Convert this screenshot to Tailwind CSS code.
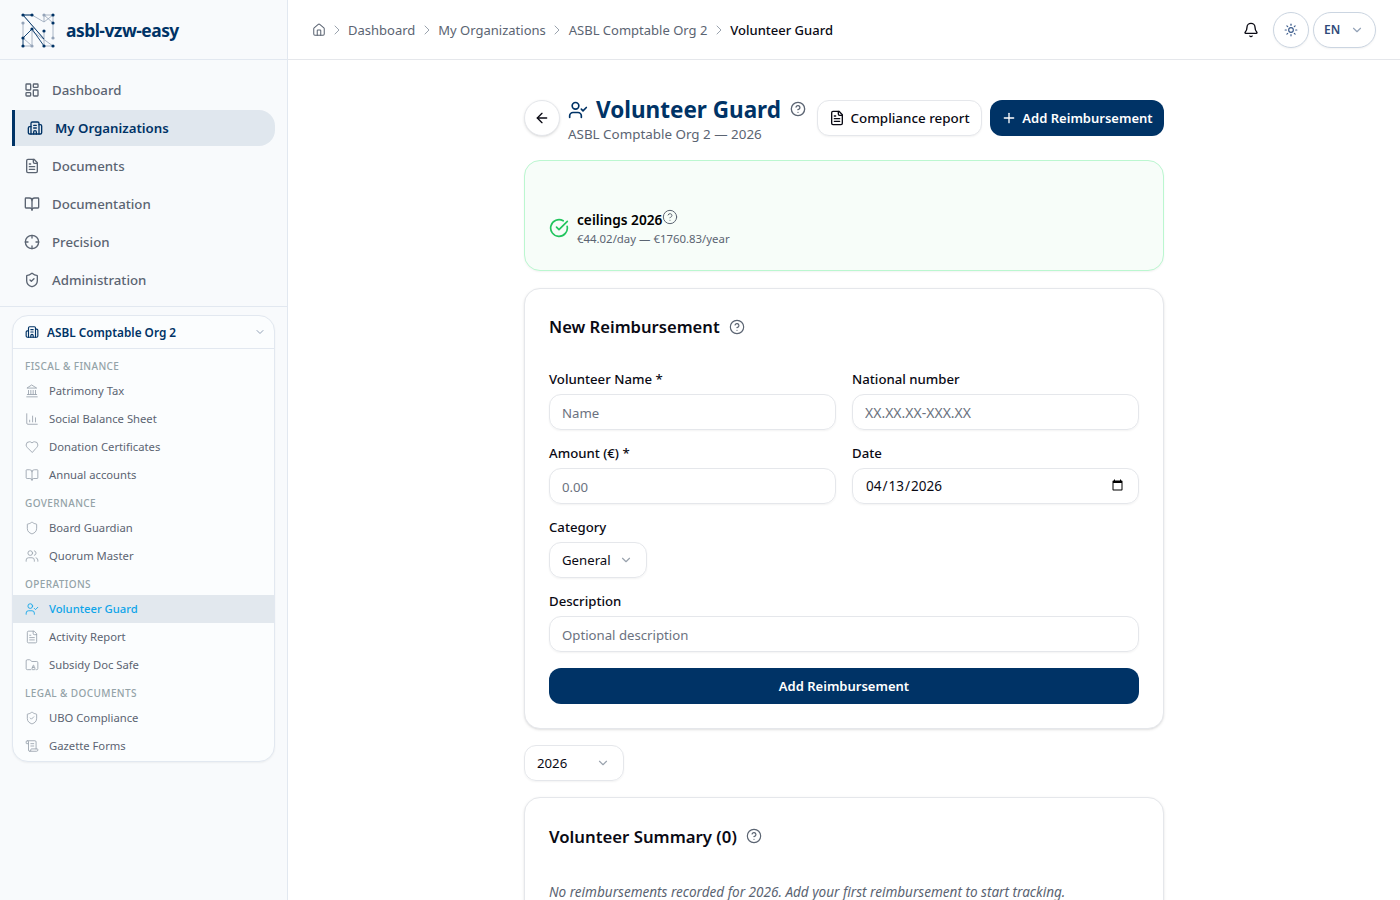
<!DOCTYPE html>
<html lang="en">
  <head>
    <meta charset="UTF-8" />
    <title>Volunteer Guard</title>
    <script src="https://cdn.jsdelivr.net/npm/@tailwindcss/browser@4"></script>
  </head>
  <body class="bg-white font-['Noto_Sans',sans-serif] text-[#0a0a14]">
    <svg class="hidden">
      <symbol id="i-dash" viewBox="0 0 24 24" fill="none" stroke="currentColor" stroke-linecap="round" stroke-linejoin="round"><rect x="3" y="3" width="7" height="9" rx="1"/><rect x="14" y="3" width="7" height="5" rx="1"/><rect x="14" y="12" width="7" height="9" rx="1"/><rect x="3" y="16" width="7" height="5" rx="1"/></symbol>
      <symbol id="i-building" viewBox="0 0 24 24" fill="none" stroke="currentColor" stroke-linecap="round" stroke-linejoin="round"><path d="M10 12h4"/><path d="M10 8h4"/><path d="M14 21v-3a2 2 0 0 0-4 0v3"/><path d="M6 10H4a2 2 0 0 0-2 2v7a2 2 0 0 0 2 2h16a2 2 0 0 0 2-2V9a2 2 0 0 0-2-2h-2"/><path d="M6 21V5a2 2 0 0 1 2-2h8a2 2 0 0 1 2 2v16"/></symbol>
      <symbol id="i-file" viewBox="0 0 24 24" fill="none" stroke="currentColor" stroke-linecap="round" stroke-linejoin="round"><path d="M15 2H6a2 2 0 0 0-2 2v16a2 2 0 0 0 2 2h12a2 2 0 0 0 2-2V7Z"/><path d="M14 2v4a2 2 0 0 0 2 2h4"/><path d="M10 9H8"/><path d="M16 13H8"/><path d="M16 17H8"/></symbol>
      <symbol id="i-book" viewBox="0 0 24 24" fill="none" stroke="currentColor" stroke-linecap="round" stroke-linejoin="round"><path d="M12 7v14"/><path d="M3 18a1 1 0 0 1-1-1V4a1 1 0 0 1 1-1h5a4 4 0 0 1 4 4 4 4 0 0 1 4-4h5a1 1 0 0 1 1 1v13a1 1 0 0 1-1 1h-6a3 3 0 0 0-3 3 3 3 0 0 0-3-3z"/></symbol>
      <symbol id="i-cross" viewBox="0 0 24 24" fill="none" stroke="currentColor" stroke-linecap="round" stroke-linejoin="round"><circle cx="12" cy="12" r="10"/><path d="M22 12h-4"/><path d="M6 12H2"/><path d="M12 6V2"/><path d="M12 22v-4"/></symbol>
      <symbol id="i-shieldc" viewBox="0 0 24 24" fill="none" stroke="currentColor" stroke-linecap="round" stroke-linejoin="round"><path d="M20 13c0 5-3.5 7.5-7.66 8.95a1 1 0 0 1-.67-.01C7.5 20.5 4 18 4 13V6a1 1 0 0 1 1-1c2 0 4.5-1.2 6.24-2.72a1.17 1.17 0 0 1 1.52 0C14.51 3.81 17 5 19 5a1 1 0 0 1 1 1z"/><path d="m9 12 2 2 4-4"/></symbol>
      <symbol id="i-shield" viewBox="0 0 24 24" fill="none" stroke="currentColor" stroke-linecap="round" stroke-linejoin="round"><path d="M20 13c0 5-3.5 7.5-7.66 8.95a1 1 0 0 1-.67-.01C7.5 20.5 4 18 4 13V6a1 1 0 0 1 1-1c2 0 4.5-1.2 6.24-2.72a1.17 1.17 0 0 1 1.52 0C14.51 3.81 17 5 19 5a1 1 0 0 1 1 1z"/></symbol>
      <symbol id="i-bank" viewBox="0 0 24 24" fill="none" stroke="currentColor" stroke-linecap="round" stroke-linejoin="round"><path d="M3 22h18"/><path d="M6 18v-7"/><path d="M10 18v-7"/><path d="M14 18v-7"/><path d="M18 18v-7"/><path d="M4 18h16"/><path d="M12 2l8 5H4z"/></symbol>
      <symbol id="i-chart" viewBox="0 0 24 24" fill="none" stroke="currentColor" stroke-linecap="round" stroke-linejoin="round"><path d="M3 3v16a2 2 0 0 0 2 2h16"/><path d="M8 17v-3"/><path d="M13 17V7"/><path d="M18 17V10"/></symbol>
      <symbol id="i-heart" viewBox="0 0 24 24" fill="none" stroke="currentColor" stroke-linecap="round" stroke-linejoin="round"><path d="M19 14c1.49-1.46 3-3.21 3-5.5A5.5 5.5 0 0 0 16.5 3c-1.76 0-3 .5-4.5 2-1.5-1.5-2.74-2-4.5-2A5.5 5.5 0 0 0 2 8.5c0 2.3 1.5 4.05 3 5.5l7 7Z"/></symbol>
      <symbol id="i-users" viewBox="0 0 24 24" fill="none" stroke="currentColor" stroke-linecap="round" stroke-linejoin="round"><path d="M16 21v-2a4 4 0 0 0-4-4H6a4 4 0 0 0-4 4v2"/><circle cx="9" cy="7" r="4"/><path d="M22 21v-2a4 4 0 0 0-3-3.87"/><path d="M16 3.13a4 4 0 0 1 0 7.75"/></symbol>
      <symbol id="i-ucheck" viewBox="0 0 24 24" fill="none" stroke="currentColor" stroke-linecap="round" stroke-linejoin="round"><path d="M16 21v-2a4 4 0 0 0-4-4H6a4 4 0 0 0-4 4v2"/><circle cx="9" cy="7" r="4"/><path d="m16 11 2 2 4-4"/></symbol>
      <symbol id="i-folder" viewBox="0 0 24 24" fill="none" stroke="currentColor" stroke-linecap="round" stroke-linejoin="round"><path d="M10 20H4a2 2 0 0 1-2-2V5a2 2 0 0 1 2-2h3.9a2 2 0 0 1 1.69.9l.81 1.2a2 2 0 0 0 1.67.9H20a2 2 0 0 1 2 2v10a2 2 0 0 1-2 2h-1"/><rect x="12" y="16" width="5" height="4" rx="1"/><path d="M15.5 16v-2.5a1 1 0 0 0-2 0V16"/></symbol>
      <symbol id="i-scroll" viewBox="0 0 24 24" fill="none" stroke="currentColor" stroke-linecap="round" stroke-linejoin="round"><path d="M15 12h-5"/><path d="M15 8h-5"/><path d="M19 17V5a2 2 0 0 0-2-2H4"/><path d="M8 21h12a2 2 0 0 0 2-2v-1a1 1 0 0 0-1-1H11a1 1 0 0 0-1 1v1a2 2 0 1 1-4 0V5a2 2 0 1 0-4 0v2a1 1 0 0 0 1 1h3"/></symbol>
      <symbol id="i-help" viewBox="0 0 24 24" fill="none" stroke="currentColor" stroke-linecap="round" stroke-linejoin="round"><circle cx="12" cy="12" r="10"/><path d="M9.09 9a3 3 0 0 1 5.83 1c0 2-3 3-3 3"/><path d="M12 17h.01"/></symbol>
      <symbol id="i-chev" viewBox="0 0 24 24" fill="none" stroke="currentColor" stroke-linecap="round" stroke-linejoin="round"><path d="m6 9 6 6 6-6"/></symbol>
      <symbol id="i-right" viewBox="0 0 24 24" fill="none" stroke="currentColor" stroke-linecap="round" stroke-linejoin="round"><path d="m9 18 6-6-6-6"/></symbol>
      <symbol id="i-home" viewBox="0 0 24 24" fill="none" stroke="currentColor" stroke-linecap="round" stroke-linejoin="round"><path d="M15 21v-8a1 1 0 0 0-1-1h-4a1 1 0 0 0-1 1v8"/><path d="M3 10a2 2 0 0 1 .709-1.528l7-5.999a2 2 0 0 1 2.582 0l7 5.999A2 2 0 0 1 21 10v9a2 2 0 0 1-2 2H5a2 2 0 0 1-2-2z"/></symbol>
    </svg>

    <div class="flex h-screen overflow-hidden">
      <aside class="w-[288px] shrink-0 border-r border-[#e2e8f0] bg-[#f8fafc]">
        <div class="flex h-[60px] items-center gap-[11px] border-b border-[#e2e8f0] pl-[21px]">
          <svg class="h-[36px] w-[34px]" viewBox="0 0 34 36" fill="none">
            <g stroke="#94a3b8" stroke-width="0.8">
              <path d="M2 3h9M23 3h9v24M23 3v7M23 10l9-7M23 3l9 8M2 10v16M11 3l12 7M2 3l21 24M11 19l21 15M23 19v15"/>
              <path d="M11 19v15M2 34h9M23 34h9M2 26l9 8"/>
            </g>
            <g stroke="#003366" stroke-width="0.9">
              <path d="M2 3l21 24M2 26l9-9 12 17M2 26v8M2 3h9"/>
            </g>
            <g fill="#003366">
              <circle cx="2" cy="3" r="1.6"/><circle cx="11" cy="3" r="1.6"/><circle cx="32" cy="3" r="1.6"/><circle cx="32" cy="11" r="1.6"/>
              <circle cx="11" cy="17" r="1.6"/><circle cx="23" cy="19" r="1.6"/><circle cx="2" cy="26" r="1.6"/><circle cx="2" cy="34" r="1.6"/>
              <circle cx="23" cy="34" r="1.6"/><circle cx="32" cy="34" r="1.6"/>
            </g>
            <g fill="#94a3b8">
              <circle cx="23" cy="3" r="1.6"/><circle cx="2" cy="11" r="1.6"/><circle cx="32" cy="26" r="1.6"/><circle cx="11" cy="34" r="1.6"/>
            </g>
          </svg>
          <span class="pt-[2px] text-[17.4px] font-bold tracking-[-0.5px] text-[#003366]">asbl-vzw-easy</span>
        </div>

        <nav class="flex flex-col gap-[2px] border-b border-[#e2e8f0] px-3 pt-3 pb-2 text-[13.25px] font-medium text-[#5b6472]">
          <a class="flex h-9 items-center gap-3 px-3"><svg class="size-4 stroke-[2]"><use href="#i-dash"/></svg><span class="pt-[2px]">Dashboard</span></a>
          <a class="flex h-9 items-center gap-3 rounded-r-2xl border-l-[3px] border-[#003366] bg-[#e0e7ee] px-3 pr-3 font-semibold text-[#003366]"><svg class="size-4 stroke-[2]"><use href="#i-building"/></svg><span class="pt-[2px]">My Organizations</span></a>
          <a class="flex h-9 items-center gap-3 px-3"><svg class="size-4 stroke-[2]"><use href="#i-file"/></svg><span class="pt-[2px]">Documents</span></a>
          <a class="flex h-9 items-center gap-3 px-3"><svg class="size-4 stroke-[2]"><use href="#i-book"/></svg><span class="pt-[2px]">Documentation</span></a>
          <a class="flex h-9 items-center gap-3 px-3"><svg class="size-4 stroke-[2]"><use href="#i-cross"/></svg><span class="pt-[2px]">Precision</span></a>
          <a class="flex h-9 items-center gap-3 px-3"><svg class="size-4 stroke-[2]"><use href="#i-shieldc"/></svg><span class="pt-[2px]">Administration</span></a>
        </nav>

        <div class="mx-3 mt-2 overflow-hidden rounded-2xl border border-[#e2e8f0] bg-[#fbfdfe] shadow-xs">
          <div class="flex h-[33px] items-center gap-2 border-b border-[#e2e8f0] pr-2 pl-3 text-[11.8px] font-semibold text-[#003366]">
            <svg class="size-[14px] stroke-[2]"><use href="#i-building"/></svg>
            <span class="flex-1 pt-[2px]">ASBL Comptable Org 2</span>
            <svg class="size-3 stroke-[2] text-[#94a3b8]"><use href="#i-chev"/></svg>
          </div>
          <div class="pb-[1px] text-[11.25px] text-[#5b6472]">
            <div class="px-3 pt-[10px] pb-[3px] text-[10px] leading-[15px] font-medium tracking-[0.4px] text-[#94a3a8]">FISCAL &amp; FINANCE</div>
            <a class="flex h-7 items-center gap-[10px] px-3"><svg class="size-[14px] stroke-[1.5] text-[#9aa3ae]"><use href="#i-bank"/></svg>Patrimony Tax</a>
            <a class="flex h-7 items-center gap-[10px] px-3"><svg class="size-[14px] stroke-[1.5] text-[#9aa3ae]"><use href="#i-chart"/></svg>Social Balance Sheet</a>
            <a class="flex h-7 items-center gap-[10px] px-3"><svg class="size-[14px] stroke-[1.5] text-[#9aa3ae]"><use href="#i-heart"/></svg>Donation Certificates</a>
            <a class="flex h-7 items-center gap-[10px] px-3"><svg class="size-[14px] stroke-[1.5] text-[#9aa3ae]"><use href="#i-book"/></svg>Annual accounts</a>
            <div class="px-3 pt-[7px] pb-[3px] text-[10px] leading-[15px] font-medium tracking-[0.4px] text-[#94a3a8]">GOVERNANCE</div>
            <a class="flex h-7 items-center gap-[10px] px-3"><svg class="size-[14px] stroke-[1.5] text-[#9aa3ae]"><use href="#i-shield"/></svg>Board Guardian</a>
            <a class="flex h-7 items-center gap-[10px] px-3"><svg class="size-[14px] stroke-[1.5] text-[#9aa3ae]"><use href="#i-users"/></svg>Quorum Master</a>
            <div class="px-3 pt-[7px] pb-[3px] text-[10px] leading-[15px] font-medium tracking-[0.4px] text-[#94a3a8]">OPERATIONS</div>
            <a class="flex h-7 items-center gap-[10px] bg-[#e2e8ee] px-3 font-medium text-[#0ea5e9]"><svg class="size-[14px] stroke-[1.5]"><use href="#i-ucheck"/></svg>Volunteer Guard</a>
            <a class="flex h-7 items-center gap-[10px] px-3"><svg class="size-[14px] stroke-[1.5] text-[#9aa3ae]"><use href="#i-file"/></svg>Activity Report</a>
            <a class="flex h-7 items-center gap-[10px] px-3"><svg class="size-[14px] stroke-[1.5] text-[#9aa3ae]"><use href="#i-folder"/></svg>Subsidy Doc Safe</a>
            <div class="px-3 pt-[7px] pb-[3px] text-[10px] leading-[15px] font-medium tracking-[0.4px] text-[#94a3a8]">LEGAL &amp; DOCUMENTS</div>
            <a class="flex h-7 items-center gap-[10px] px-3"><svg class="size-[14px] stroke-[1.5] text-[#9aa3ae]"><use href="#i-shieldc"/></svg>UBO Compliance</a>
            <a class="flex h-7 items-center gap-[10px] px-3"><svg class="size-[14px] stroke-[1.5] text-[#9aa3ae]"><use href="#i-scroll"/></svg>Gazette Forms</a>
          </div>
        </div>
      </aside>

      <div class="min-w-0 flex-1">
        <header class="flex h-[60px] items-center border-b border-[#e5e7eb] pr-6 pl-6">
          <div class="flex flex-1 items-center gap-[3.5px] text-[13px] text-[#5b6472]">
            <svg class="-mr-[1px] size-[14px] stroke-[1.75]"><use href="#i-home"/></svg>
            <svg class="size-4 stroke-[1.5] text-[#9aa3ae]"><use href="#i-right"/></svg>
            <span class="pt-[2px]">Dashboard</span>
            <svg class="size-4 stroke-[1.5] text-[#9aa3ae]"><use href="#i-right"/></svg>
            <span class="pt-[2px]">My Organizations</span>
            <svg class="size-4 stroke-[1.5] text-[#9aa3ae]"><use href="#i-right"/></svg>
            <span class="pt-[2px]">ASBL Comptable Org 2</span>
            <svg class="size-4 stroke-[1.5] text-[#9aa3ae]"><use href="#i-right"/></svg>
            <span class="pt-[2px] font-medium text-[#0a0a14]">Volunteer Guard</span>
          </div>
          <svg class="mr-[14px] size-4" viewBox="0 0 24 24" fill="none" stroke="currentColor" stroke-width="2" stroke-linecap="round" stroke-linejoin="round"><path d="M10.268 21a2 2 0 0 0 3.464 0"/><path d="M3.262 15.326A1 1 0 0 0 4 17h16a1 1 0 0 0 .74-1.673C19.41 13.956 18 12.499 18 8A6 6 0 0 0 6 8c0 4.499-1.411 5.956-2.738 7.326"/></svg>
          <button class="flex size-9 items-center justify-center rounded-full border border-[#cbd5e1] bg-white shadow-xs">
            <svg class="size-[14px] text-[#3b5b8c]" viewBox="0 0 24 24" fill="none" stroke="currentColor" stroke-width="2" stroke-linecap="round" stroke-linejoin="round"><circle cx="12" cy="12" r="4"/><path d="M12 2v2"/><path d="M12 20v2"/><path d="m4.93 4.93 1.41 1.41"/><path d="m17.66 17.66 1.41 1.41"/><path d="M2 12h2"/><path d="M20 12h2"/><path d="m6.34 17.66-1.41 1.41"/><path d="m19.07 4.93-1.41 1.41"/></svg>
          </button>
          <button class="ml-1 flex h-9 w-[63px] items-center gap-[10px] rounded-full border border-[#cbd5e1] bg-white pl-[10px] text-[12px] font-semibold text-[#2f4a7a] shadow-xs">
            EN
            <svg class="size-[14px] stroke-[2] text-[#94a3b8]"><use href="#i-chev"/></svg>
          </button>
        </header>

        <main class="mx-auto flex w-[640px] flex-col pt-10">
          <div class="flex items-start">
            <button class="flex size-9 items-center justify-center rounded-full border border-[#e5e7eb] bg-white shadow-sm">
              <svg class="size-4" viewBox="0 0 24 24" fill="none" stroke="currentColor" stroke-width="2" stroke-linecap="round" stroke-linejoin="round"><path d="m12 19-7-7 7-7"/><path d="M19 12H5"/></svg>
            </button>
            <div class="ml-2 flex-1">
              <div class="-mt-[4px] flex h-[28px] items-center">
                <svg class="mr-2 size-5 stroke-[2] text-[#003366]"><use href="#i-ucheck"/></svg>
                <h1 class="text-[22.5px] leading-[28px] font-bold whitespace-nowrap text-[#003366]">Volunteer Guard</h1>
                <svg class="-mt-[3px] ml-[9px] size-4 stroke-[2] text-[#5b6472]"><use href="#i-help"/></svg>
              </div>
              <p class="text-[13.4px] leading-5 text-[#5b6472]">ASBL Comptable Org 2 — 2026</p>
            </div>
            <button class="flex h-9 w-[165px] items-center justify-center gap-[5px] rounded-xl border border-[#e5e7eb] bg-white text-[13.4px] font-medium shadow-xs">
              <svg class="size-4 stroke-[2]"><use href="#i-file"/></svg>Compliance report
            </button>
            <button class="ml-2 flex h-9 w-[174px] items-center justify-center gap-[5px] rounded-xl bg-[#003366] text-[13px] font-semibold text-white">
              <svg class="size-4" viewBox="0 0 24 24" fill="none" stroke="currentColor" stroke-width="2" stroke-linecap="round"><path d="M5 12h14"/><path d="M12 5v14"/></svg><span class="pt-[2px]">Add Reimbursement</span>
            </button>
          </div>

          <section class="mt-4 flex h-[111px] items-center gap-2 rounded-2xl border border-[#bbf7d0] bg-[#f7fdf9] px-6 pt-[25px] shadow-xs">
            <svg class="size-5 stroke-[2] text-[#22c55e]" viewBox="0 0 24 24" fill="none" stroke="currentColor" stroke-linecap="round" stroke-linejoin="round"><path d="M21.801 10A10 10 0 1 1 17 3.335"/><path d="m9 11 3 3L22 4"/></svg>
            <div>
              <div class="flex items-start text-[13.7px] leading-5 font-semibold text-black">ceilings 2026<svg class="-mt-[1px] size-4 stroke-[1.5] font-normal text-[#5b6472]"><use href="#i-help"/></svg></div>
              <p class="mt-[1px] text-[11.4px] leading-4 text-[#5b6472]">€44.02/day — €1760.83/year</p>
            </div>
          </section>

          <section class="mt-[17px] rounded-2xl border border-[#e5e7eb] bg-white px-6 pt-6 pb-6 shadow-sm">
            <div class="flex h-7 items-center gap-[9px]">
              <h2 class="text-[16.6px] font-semibold">New Reimbursement</h2>
              <svg class="size-4 stroke-[1.75] text-[#5b6472]"><use href="#i-help"/></svg>
            </div>
            <div class="mt-7 grid grid-cols-2 gap-x-4 gap-y-[13px]">
              <label class="block">
                <span class="mb-[5px] block h-5 text-[13.2px] leading-5 font-medium">Volunteer Name *</span>
                <input class="h-9 w-full rounded-xl border border-[#e5e7eb] px-3 pt-[2px] text-[13.2px] shadow-xs placeholder:text-[#6b7280]" placeholder="Name" />
              </label>
              <label class="block">
                <span class="mb-[5px] block h-5 text-[13.2px] leading-5 font-medium">National number</span>
                <input class="h-9 w-full rounded-xl border border-[#e5e7eb] px-3 text-[14px] shadow-xs placeholder:text-[#6b7280]" placeholder="XX.XX.XX-XXX.XX" />
              </label>
              <label class="block">
                <span class="mb-[5px] block h-5 text-[13.2px] leading-5 font-medium">Amount (€) *</span>
                <input class="h-9 w-full rounded-xl border border-[#e5e7eb] px-3 pt-[2px] text-[13.2px] shadow-xs placeholder:text-[#6b7280]" placeholder="0.00" />
              </label>
              <label class="block">
                <span class="mb-[5px] block h-5 text-[13.2px] leading-5 font-medium">Date</span>
                <input type="date" value="2026-04-13" class="h-9 w-full rounded-xl border border-[#e5e7eb] px-3 text-[13.5px] shadow-xs" />
              </label>
              <div class="col-span-2">
                <span class="mb-[5px] block h-5 text-[13.2px] leading-5 font-medium">Category</span>
                <div class="flex h-9 w-[98px] items-center justify-between rounded-xl border border-[#e5e7eb] pr-[13px] pl-3 text-[13.2px] shadow-xs">
                  <span class="pt-[2px]">General</span>
                  <svg class="size-[14px] stroke-[2] text-[#9aa3ae]"><use href="#i-chev"/></svg>
                </div>
              </div>
              <label class="col-span-2 block">
                <span class="mb-[5px] block h-5 text-[13.2px] leading-5 font-medium">Description</span>
                <input class="h-9 w-full rounded-xl border border-[#e5e7eb] px-3 pt-[2px] text-[13.2px] shadow-xs placeholder:text-[#6b7280]" placeholder="Optional description" />
              </label>
            </div>
            <button class="mt-4 h-9 w-full rounded-xl bg-[#003366] pt-[2px] text-[13px] font-semibold text-white">Add Reimbursement</button>
          </section>

          <div class="mt-4 flex h-9 w-[100px] items-center justify-between rounded-xl border border-[#e5e7eb] pr-[13px] pl-3 text-[13.2px] shadow-xs">
            <span class="pt-[2px]">2026</span>
            <svg class="size-[14px] stroke-[2] text-[#9aa3ae]"><use href="#i-chev"/></svg>
          </div>

          <section class="mt-4 rounded-2xl border border-[#e5e7eb] bg-white px-6 pt-6 pb-6 shadow-sm">
            <div class="flex h-7 items-center gap-[9px]">
              <h2 class="pt-[2px] text-[16.75px] font-semibold">Volunteer Summary (0)</h2>
              <svg class="size-4 stroke-[1.75] text-[#5b6472]"><use href="#i-help"/></svg>
            </div>
            <p class="mt-[32px] text-[13.55px] text-[#5b6472] italic">No reimbursements recorded for 2026. Add your first reimbursement to start tracking.</p>
          </section>
        </main>
      </div>
    </div>
  </body>
</html>
